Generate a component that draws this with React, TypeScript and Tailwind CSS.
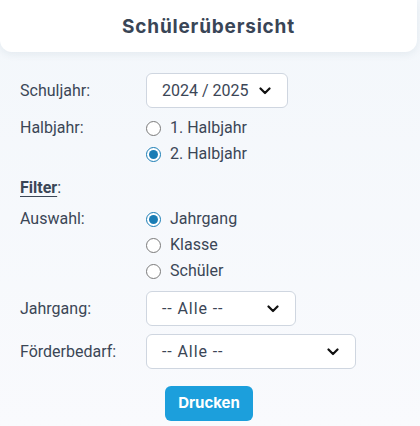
import { useState } from "react";

const font = { fontFamily: "Roboto, 'Liberation Sans', sans-serif" };

function Chevron() {
  return (
    <svg width="12" height="8" viewBox="0 0 12 8" className="shrink-0">
      <path d="M1.5 1.5 6 6l4.5-4.5" fill="none" stroke="#111" strokeWidth="2.2" strokeLinecap="round" strokeLinejoin="round" />
    </svg>
  );
}

function Select({ value, width, wide }: { value: string; width: string; wide?: boolean }) {
  return (
    <div className={`flex h-[35px] items-center justify-between rounded-md border border-[#cfd6e0] bg-white pl-[15px] pr-[16px] text-[16px] text-[#3b4656] ${width}`}>
      <span className={wide ? "tracking-[0.9px]" : ""}>{value}</span>
      <Chevron />
    </div>
  );
}

function Radio({ label, checked, onClick }: { label: string; checked: boolean; onClick: () => void }) {
  return (
    <button type="button" onClick={onClick} className="flex h-[26px] items-center gap-[9px] text-[16px] text-[#3b4656]">
      {checked ? (
        <span className="flex h-[15px] w-[15px] items-center justify-center rounded-full border-[1.5px] border-[#1a7db5] bg-white">
          <span className="h-[9px] w-[9px] rounded-full bg-[#1a7db5]" />
        </span>
      ) : (
        <span className="h-[15px] w-[15px] rounded-full border border-[#7a7a7a] bg-white" />
      )}
      <span>{label}</span>
    </button>
  );
}

export default function App() {
  const [halbjahr, setHalbjahr] = useState(2);
  const [auswahl, setAuswahl] = useState("Jahrgang");

  return (
    <div className="min-h-[426px] w-[420px] bg-gradient-to-b from-[#f3f7fb] to-[#f9fafd]" style={font}>
      <header className="flex h-[52px] w-[417px] items-center justify-center rounded-b-xl bg-white pt-[3px] shadow-[0_2px_8px_rgba(30,60,90,0.08)]">
        <h1 className="text-[19px] font-bold tracking-[0.8px] text-[#394556]" style={{ fontFamily: "Inter, sans-serif" }}>
          Schülerübersicht
        </h1>
      </header>

      <div className="pl-[20px] pt-[21px]">
        <div className="flex items-center">
          <span className="w-[126px] text-[16px] text-[#3b4656]">Schuljahr:</span>
          <Select value="2024 / 2025" width="w-[142px]" />
        </div>

        <div className="mt-[7px] flex">
          <span className="w-[126px] pt-[2px] text-[16px] leading-[22px] text-[#3b4656]">Halbjahr:</span>
          <div className="flex flex-col items-start">
            <Radio label="1. Halbjahr" checked={halbjahr === 1} onClick={() => setHalbjahr(1)} />
            <Radio label="2. Halbjahr" checked={halbjahr === 2} onClick={() => setHalbjahr(2)} />
          </div>
        </div>

        <div className="mt-[9px] h-[24px] text-[16px] leading-[24px] text-[#3b4656]">
          <span className="font-bold underline underline-offset-[3px]">Filter</span>:
        </div>

        <div className="mt-[6px] flex">
          <span className="w-[126px] pt-[2px] text-[16px] leading-[22px] text-[#3b4656]">Auswahl:</span>
          <div className="flex flex-col items-start">
            {["Jahrgang", "Klasse", "Schüler"].map((a) => (
              <Radio key={a} label={a} checked={auswahl === a} onClick={() => setAuswahl(a)} />
            ))}
          </div>
        </div>

        <div className="mt-[7px] flex items-center">
          <span className="w-[126px] text-[16px] text-[#3b4656]">Jahrgang:</span>
          <Select value="-- Alle --" width="w-[150px]" wide />
        </div>

        <div className="mt-[8px] flex items-center">
          <span className="w-[126px] text-[16px] text-[#3b4656]">Förderbedarf:</span>
          <Select value="-- Alle --" width="w-[210px]" wide />
        </div>

        <div className="mt-[17px] pl-[145px]">
          <button
            type="button"
            className="h-[35px] w-[88px] rounded-md bg-[#1c9fdc] text-[15px] font-bold text-white"
            style={{ fontFamily: "Inter, sans-serif" }}
          >
            Drucken
          </button>
        </div>
      </div>
    </div>
  );
}
